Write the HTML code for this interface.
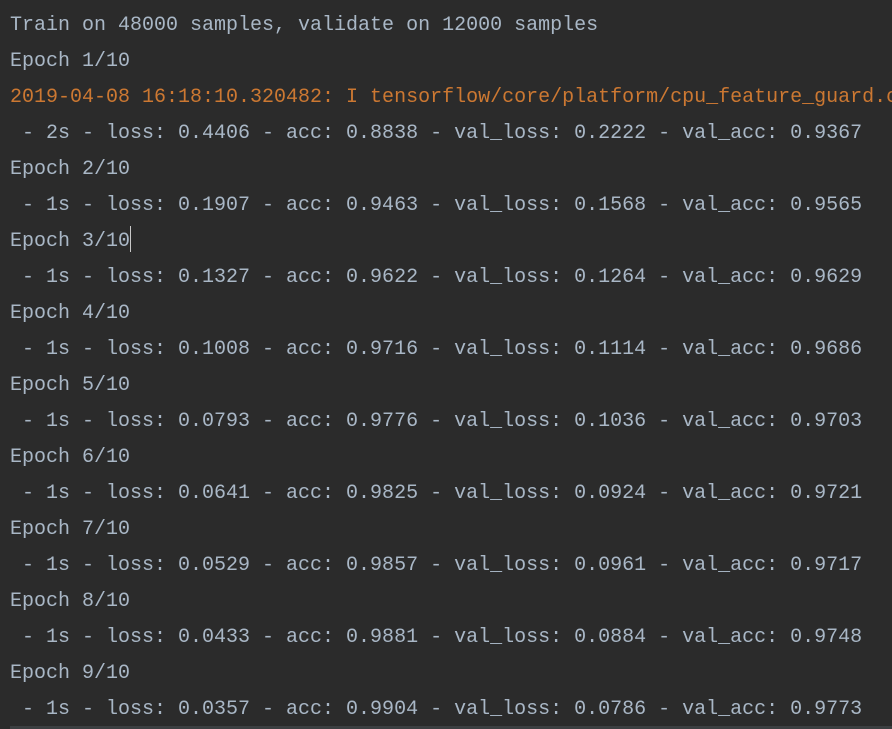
<!DOCTYPE html>
<html><head><meta charset="utf-8"><style>
html,body{margin:0;padding:0;background:#2b2b2b;width:892px;height:729px;overflow:hidden}
pre{margin:0;padding:8px 0 0 10px;font-family:"Liberation Mono",monospace;font-size:20px;line-height:36px;color:#a9b7c6;white-space:pre}
.o{color:#cc7832}
.cur{display:inline-block;width:1px;height:26px;background:#c8c8c8;vertical-align:-6px}
.bl{position:absolute;left:10px;right:0;top:726px;height:3px;background:#3c3f41}
</style></head><body>
<pre>Train on 48000 samples, validate on 12000 samples
Epoch 1/10
<span class="o">2019-04-08 16:18:10.320482: I tensorflow/core/platform/cpu_feature_guard.cc</span>
 - 2s - loss: 0.4406 - acc: 0.8838 - val_loss: 0.2222 - val_acc: 0.9367
Epoch 2/10
 - 1s - loss: 0.1907 - acc: 0.9463 - val_loss: 0.1568 - val_acc: 0.9565
Epoch 3/10<span class="cur"></span>
 - 1s - loss: 0.1327 - acc: 0.9622 - val_loss: 0.1264 - val_acc: 0.9629
Epoch 4/10
 - 1s - loss: 0.1008 - acc: 0.9716 - val_loss: 0.1114 - val_acc: 0.9686
Epoch 5/10
 - 1s - loss: 0.0793 - acc: 0.9776 - val_loss: 0.1036 - val_acc: 0.9703
Epoch 6/10
 - 1s - loss: 0.0641 - acc: 0.9825 - val_loss: 0.0924 - val_acc: 0.9721
Epoch 7/10
 - 1s - loss: 0.0529 - acc: 0.9857 - val_loss: 0.0961 - val_acc: 0.9717
Epoch 8/10
 - 1s - loss: 0.0433 - acc: 0.9881 - val_loss: 0.0884 - val_acc: 0.9748
Epoch 9/10
 - 1s - loss: 0.0357 - acc: 0.9904 - val_loss: 0.0786 - val_acc: 0.9773</pre>
<div class="bl"></div>
</body></html>
